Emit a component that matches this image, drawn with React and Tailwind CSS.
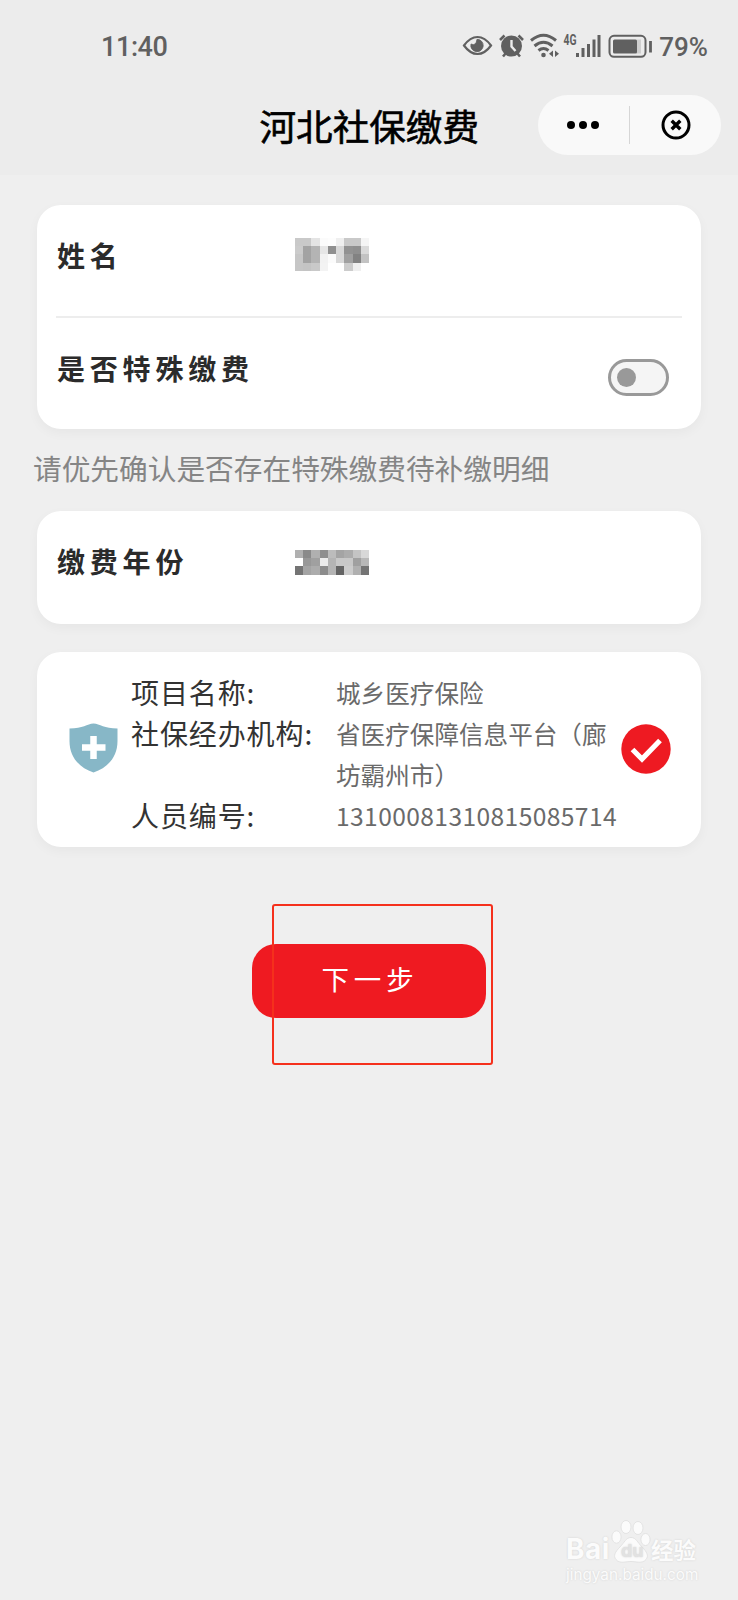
import React, { useState } from 'react';

const nameCells = [
    ['#c9c9c9', '#c9c9c9', '#e4e4e4', '#fbfbfb', '#fdfdfd', '#efefef', '#c9c9c9', '#c9c9c9', '#f5f5f5'],
    ['#cbcbcb', '#a3a3a3', '#b4b4b4', '#e6e6e6', '#8f8f8f', '#d8d8d8', '#929292', '#8f8f8f', '#dadada'],
    ['#c6c6c6', '#a3a3a3', '#b4b4b4', '#f2f2f2', '#fbfbfb', '#d8d8d8', '#a0a0a0', '#828282', '#c3c3c3'],
    ['#c6c6c6', '#c4c4c4', '#c9c9c9', '#f3f3f3', '#ffffff', '#ffffff', '#cccccc', '#efefef', '#ffffff'],
];

const yearCells = [
    ['#b0b0b0', '#8a8a8a', '#b0b0b0', '#8e8e8e', '#bcbcbc', '#a4a4a4', '#acacac', '#c4c4c4', '#d8d8d8'],
    ['#ffffff', '#989898', '#a0a0a0', '#ebebeb', '#b4b4b4', '#c8c8c8', '#c8c8c8', '#a0a0a0', '#b8b8b8'],
    ['#747474', '#a4a4a4', '#acacac', '#8c8c8c', '#b4b4b4', '#646464', '#cccccc', '#b0b0b0', '#747474'],
];

function Mosaic({ rows }) {
    return (
        <div className="flex w-[74px] flex-col">
            {rows.map((row, i) => (
                <div key={i} className="flex h-[8.2px]">
                    {row.map((color, j) => (
                        <span key={j} className="flex-1" style={{ backgroundColor: color }} />
                    ))}
                </div>
            ))}
        </div>
    );
}

function StatusBar() {
    return (
        <div className="flex h-[90px] items-center justify-between pl-[101px] pr-[30px] text-[#606060]">
            <span className="pt-[4px] font-[Roboto] text-[27px] font-medium tracking-[-0.4px]">11:40</span>
            <div className="flex items-center">
                <svg width="192" height="28" viewBox="0 0 192 28" fill="none" stroke="currentColor">
                    {/* eye */}
                    <path d="M2 14.5C6 9 10.500 6 15.500 6S25 9 29 14.500C25 20 20.500 23 15.500 23S6 20 2 14.500Z" strokeWidth="2.2" />
                    <path d="M15 8.300A6.200 6.200 0 1 1 9 13Q14 15.500 15 8.300Z" fill="currentColor" strokeWidth="0.800" />
                    {/* alarm clock */}
                    <circle cx="49.500" cy="15" r="10.500" fill="currentColor" stroke="none" />
                    <path d="M38 9 42.500 4.500M61 9 56.500 4.500M44 22 41 25.500M55 22 58 25.500" strokeWidth="2.600" />
                    <path d="M49.500 9V15.500L53.500 20" stroke="#ececec" strokeWidth="2.400" />
                    {/* wifi */}
                    <path d="M69 9.500Q81.500 -1 94 9.500M72.500 15Q81.500 7.500 90.500 15M76.500 19.500Q81.500 15.500 86.500 19.500" strokeWidth="3" />
                    <circle cx="81.500" cy="24" r="2.300" fill="currentColor" stroke="none" />
                    <path d="M91 19.500V26L87 22.700ZM93 19.500V26L97 22.700Z" fill="currentColor" stroke="none" />
                    {/* signal */}
                    <path d="M115.500 22V26M121 17V26M126.500 13V26M132 8.500V26M137 4V26" strokeWidth="3" />
                    <text x="101.500" y="13.500" fontSize="14.500" fontWeight="700" fontFamily="Roboto" textLength="13" lengthAdjust="spacingAndGlyphs" fill="currentColor" stroke="none">4G</text>
                    {/* battery */}
                    <rect x="147.500" y="4.800" width="36" height="21" rx="4.500" strokeWidth="2" />
                    <rect x="174" y="8.500" width="5" height="14" fill="#cfcfcf" stroke="none" />
                    <rect x="151" y="8.500" width="24" height="14" rx="1.500" fill="currentColor" stroke="none" />
                    <path d="M188.500 10V21.500" strokeWidth="2.800" />
                </svg>
                <span className="ml-[5px] pt-[4px] font-[Roboto] text-[26px] font-medium">79%</span>
            </div>
        </div>
    );
}

function TitleBar() {
    return (
        <div className="flex h-[85px] justify-end pr-[17px] pt-[5px]">
            <h1 className="mr-[59px] mt-[6px] text-[36.6px] leading-[50px] text-black [-webkit-text-stroke:0.6px_black]">河北社保缴费</h1>
            <div className="flex h-[60px] w-[183px] items-center rounded-full bg-[#f9f9f9]">
                <button className="flex flex-1 justify-center gap-[4px]">
                    <span className="size-[8px] rounded-full bg-black" />
                    <span className="size-[8px] rounded-full bg-black" />
                    <span className="size-[8px] rounded-full bg-black" />
                </button>
                <span className="h-[38px] w-[1.500px] bg-[#d6d6d6]" />
                <button className="flex flex-1 justify-center">
                    <svg width="30" height="30" viewBox="0 0 30 30" fill="none" stroke="#000">
                        <circle cx="15" cy="15" r="13" strokeWidth="3" />
                        <path d="M10.700 10.700 19.300 19.300M19.300 10.700 10.700 19.300" strokeWidth="3.400" />
                    </svg>
                </button>
            </div>
        </div>
    );
}

function Card({ className, children }) {
    return <section className={`rounded-[24px] bg-white shadow-[0_4px_12px_rgba(0,0,0,0.04)] ${className}`}>{children}</section>;
}

function Label({ children }) {
    return <span className="w-[237px] whitespace-nowrap text-[28px] font-bold leading-[40px] tracking-[4.8px] text-[#2b2b2b]">{children}</span>;
}

function Watermark() {
    return (
        <div className="absolute left-[566px] top-[1518px] text-[#fbfbfb] [text-shadow:0_0_2px_#cfcfcf]">
            <div className="flex h-[46px] items-end">
                <span className="w-[45px] font-[Inter] text-[28px] font-bold leading-[30px] tracking-[0.5px]">Bai</span>
                <div className="relative h-[46px] w-[40px]">
                    <svg className="absolute inset-0" width="40" height="46" viewBox="0 0 40 46" fill="#fbfbfb" stroke="#dedede" strokeWidth="0.800">
                        <ellipse cx="5.500" cy="19" rx="4.600" ry="6.200" />
                        <ellipse cx="15" cy="9" rx="5" ry="6.500" />
                        <ellipse cx="27" cy="10" rx="5" ry="6.500" />
                        <ellipse cx="34.500" cy="21.500" rx="4.600" ry="6" />
                        <path d="M20 19.500C25 19.500 26.500 24.500 31 29C36 34 38 38 35 41.500C31.500 46 25 43.500 20 43.500S8.500 46 5 41.500C2 38 4 34 9 29C13.500 24.500 15 19.500 20 19.500Z" />
                    </svg>
                    <span className="absolute left-[10px] top-[23px] font-[Inter] text-[18px] font-bold leading-[20px] text-[#e2e2e2]">du</span>
                </div>
                <span className="text-[22.5px] font-bold leading-[30px]">经验</span>
            </div>
            <div className="pt-px font-[Inter] text-[15.300px] leading-[20px]">jingyan.baidu.com</div>
        </div>
    );
}

const details = [
    { label: '项目名称:', value: '城乡医疗保险' },
    { label: '社保经办机构:', value: '省医疗保障信息平台（廊坊霸州市）' },
    { label: '人员编号:', value: '13100081310815085714', number: true },
];

export default function App() {
    const [special, setSpecial] = useState(false);

    return (
        <div className="relative h-[1600px] w-[738px] overflow-hidden bg-[#efefef] font-['Noto_Sans_CJK_SC',sans-serif]">
            <header className="h-[175px] bg-[#ececec]">
                <StatusBar />
                <TitleBar />
            </header>

            <main className="px-[37px] pt-[30px]">
                <Card className="h-[224px] px-[19px]">
                    <div className="flex h-[113px] items-start border-b-2 border-[#ededed] pl-px pt-[30px]">
                        <Label>姓名</Label>
                        <div className="ml-px pt-[3px]">
                            <Mosaic rows={nameCells} />
                        </div>
                    </div>
                    <div className="flex items-start justify-between pl-px pr-[13px] pt-[30px]">
                        <Label>是否特殊缴费</Label>
                        <button
                            onClick={() => setSpecial(!special)}
                            className={`mt-[11px] flex h-[37px] w-[61px] items-center rounded-full border-[3px] border-[#999] bg-[#f5f5f5] px-[6px] ${special ? 'justify-end' : ''}`}
                        >
                            <span className="size-[19px] rounded-full bg-[#999]" />
                        </button>
                    </div>
                </Card>

                <p className="-ml-[4px] mt-[19px] h-[63px] whitespace-nowrap text-[28.7px] leading-[40px] text-[#858585]">请优先确认是否存在特殊缴费待补缴明细</p>

                <Card className="flex h-[112.500px] items-start px-[20px] pt-[30px]">
                    <Label>缴费年份</Label>
                    <div className="ml-px pt-[9px]">
                        <Mosaic rows={yearCells} />
                    </div>
                </Card>

                <Card className="mt-[28.500px] flex h-[195px] items-center pl-[32px] pr-[30px]">
                    <svg className="mt-[-4px] shrink-0" width="49" height="50" viewBox="0 0 49 50">
                        <path d="M24.500 0.500C18 1 14 5.500 0.500 5.500V18C0.500 34 10 44.500 24.500 49.500C39 44.500 48.500 34 48.500 18V5.500C35 5.500 31 1 24.500 0.500Z" fill="#87b7c7" />
                        <path d="M13 24.500H36.500M24.500 13V36" stroke="#fff" strokeWidth="6.500" />
                    </svg>
                    <div className="ml-[13px] mt-[8px] w-[490px] shrink-0">
                        {details.map((item) => (
                            <div key={item.label} className="flex leading-[41px]">
                                <span className="w-[205px] shrink-0 text-[28px] tracking-[0.9px] text-[#333]">{item.label}</span>
                                <span className={`w-[284px] text-[24.6px] text-[#6a6a6a] ${item.number ? 'tracking-[0.4px]' : ''}`}>{item.value}</span>
                            </div>
                        ))}
                    </div>
                    <svg className="-mt-[2px] shrink-0" width="50" height="50" viewBox="0 0 50 50">
                        <circle cx="25" cy="25" r="24.700" fill="#ee1a22" />
                        <path d="M11.500 25.500 21 35 39 16.500" fill="none" stroke="#fff" strokeWidth="5.200" />
                    </svg>
                </Card>

                <div className="flex justify-center pt-[96.500px]">
                    <button className="h-[74px] w-[234px] rounded-[24px] bg-[#ef1a21] pb-[4px] pl-[2px] text-[27.5px] tracking-[4.8px] text-white">下一步</button>
                </div>
            </main>

            <div className="pointer-events-none absolute left-[271.500px] top-[904px] h-[161px] w-[221.500px] rounded-[3px] border-2 border-[#f5301c]" />
            <Watermark />
        </div>
    );
}
